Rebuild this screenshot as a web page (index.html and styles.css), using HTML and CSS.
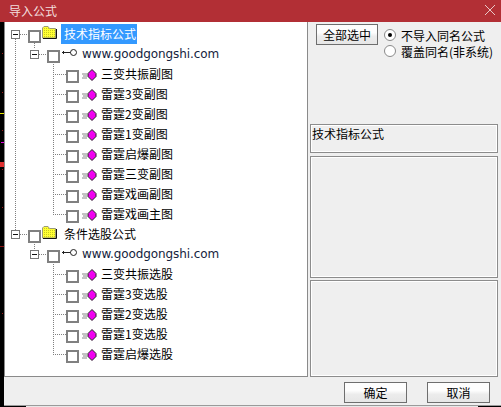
FILE: index.html
```html
<!DOCTYPE html>
<html lang="zh-CN">
<head>
    <meta charset="UTF-8">
    <meta name="viewport" content="width=device-width, initial-scale=1.0">
    <title>导入公式</title>
    <link rel="stylesheet" href="styles.css">
</head>
<body>
    <div class="dialog">
        <div class="titlebar">
            <span class="title">导入公式</span>
            <svg class="close" width="10" height="10" viewBox="0 0 10 10"><path d="M0 0L10 10M10 0L0 10" stroke="#e8c8c8" fill="none"/></svg>
        </div>
        <div class="main">
            <div class="tree">
                <svg class="lines" width="80" height="360" viewBox="0 0 80 360">
                    <defs>
                        <pattern id="dither" width="2" height="2" patternUnits="userSpaceOnUse">
                            <rect width="2" height="2" fill="#ffff33"/>
                            <rect width="1" height="1" fill="#c8c820"/>
                        </pattern>
                    </defs>
                    <path d="M15.5 17V208M20 12.5H28M34.5 21V27M39 32.5H47M53.5 40V192
                             M53 52.5H66M53 72.5H66M53 92.5H66M53 112.5H66M53 132.5H66M53 152.5H66M53 172.5H66M53 192.5H66
                             M20 212.5H28M34.5 222V228M39 232.5H47M53.5 240V332
                             M53 252.5H66M53 272.5H66M53 292.5H66M53 312.5H66M53 332.5H66"/>
                </svg>

                <div class="row lv0">
                    <span class="exp"></span><span class="check"></span>
                    <svg class="folder" width="15" height="13" viewBox="0 0 15 13"><path d="M0.5 12V2L2 0.5H6L7.5 2.5H13.5V12Z" fill="url(#dither)" stroke="#9a9a7a"/><path d="M14.5 3V12.5H1" stroke="#111" fill="none"/></svg>
                    <span class="label selected">技术指标公式</span>
                </div>
                <div class="row lv1">
                    <span class="exp"></span><span class="check"></span>
                    <svg class="key" width="15" height="8" viewBox="0 0 15 8"><path d="M0 4.5H9M1.5 3V6" stroke="#222" fill="none"/><circle cx="11.5" cy="4.5" r="3" fill="#fff" stroke="#222"/></svg>
                    <span class="label site">www.goodgongshi.com</span>
                </div>
                <div class="row lv2"><span class="check"></span><svg class="gem" width="16" height="12" viewBox="0 0 16 12"><path d="M1 5H6M2 7H6M1 9H6" stroke="#888"/><path d="M11 0.5L15 4.5V7.5L11 11.5L7 7.5V4.5Z" fill="#f000f0" stroke="#222"/></svg><span class="label">三变共振副图</span></div>
                <div class="row lv2"><span class="check"></span><svg class="gem" width="16" height="12" viewBox="0 0 16 12"><path d="M1 5H6M2 7H6M1 9H6" stroke="#888"/><path d="M11 0.5L15 4.5V7.5L11 11.5L7 7.5V4.5Z" fill="#f000f0" stroke="#222"/></svg><span class="label">雷霆3变副图</span></div>
                <div class="row lv2"><span class="check"></span><svg class="gem" width="16" height="12" viewBox="0 0 16 12"><path d="M1 5H6M2 7H6M1 9H6" stroke="#888"/><path d="M11 0.5L15 4.5V7.5L11 11.5L7 7.5V4.5Z" fill="#f000f0" stroke="#222"/></svg><span class="label">雷霆2变副图</span></div>
                <div class="row lv2"><span class="check"></span><svg class="gem" width="16" height="12" viewBox="0 0 16 12"><path d="M1 5H6M2 7H6M1 9H6" stroke="#888"/><path d="M11 0.5L15 4.5V7.5L11 11.5L7 7.5V4.5Z" fill="#f000f0" stroke="#222"/></svg><span class="label">雷霆1变副图</span></div>
                <div class="row lv2"><span class="check"></span><svg class="gem" width="16" height="12" viewBox="0 0 16 12"><path d="M1 5H6M2 7H6M1 9H6" stroke="#888"/><path d="M11 0.5L15 4.5V7.5L11 11.5L7 7.5V4.5Z" fill="#f000f0" stroke="#222"/></svg><span class="label">雷霆启爆副图</span></div>
                <div class="row lv2"><span class="check"></span><svg class="gem" width="16" height="12" viewBox="0 0 16 12"><path d="M1 5H6M2 7H6M1 9H6" stroke="#888"/><path d="M11 0.5L15 4.5V7.5L11 11.5L7 7.5V4.5Z" fill="#f000f0" stroke="#222"/></svg><span class="label">雷霆三变副图</span></div>
                <div class="row lv2"><span class="check"></span><svg class="gem" width="16" height="12" viewBox="0 0 16 12"><path d="M1 5H6M2 7H6M1 9H6" stroke="#888"/><path d="M11 0.5L15 4.5V7.5L11 11.5L7 7.5V4.5Z" fill="#f000f0" stroke="#222"/></svg><span class="label">雷霆戏画副图</span></div>
                <div class="row lv2"><span class="check"></span><svg class="gem" width="16" height="12" viewBox="0 0 16 12"><path d="M1 5H6M2 7H6M1 9H6" stroke="#888"/><path d="M11 0.5L15 4.5V7.5L11 11.5L7 7.5V4.5Z" fill="#f000f0" stroke="#222"/></svg><span class="label">雷霆戏画主图</span></div>

                <div class="row lv0">
                    <span class="exp"></span><span class="check"></span>
                    <svg class="folder" width="15" height="13" viewBox="0 0 15 13"><path d="M0.5 12V2L2 0.5H6L7.5 2.5H13.5V12Z" fill="url(#dither)" stroke="#9a9a7a"/><path d="M14.5 3V12.5H1" stroke="#111" fill="none"/></svg>
                    <span class="label">条件选股公式</span>
                </div>
                <div class="row lv1">
                    <span class="exp"></span><span class="check"></span>
                    <svg class="key" width="15" height="8" viewBox="0 0 15 8"><path d="M0 4.5H9M1.5 3V6" stroke="#222" fill="none"/><circle cx="11.5" cy="4.5" r="3" fill="#fff" stroke="#222"/></svg>
                    <span class="label site">www.goodgongshi.com</span>
                </div>
                <div class="row lv2"><span class="check"></span><svg class="gem" width="16" height="12" viewBox="0 0 16 12"><path d="M1 5H6M2 7H6M1 9H6" stroke="#888"/><path d="M11 0.5L15 4.5V7.5L11 11.5L7 7.5V4.5Z" fill="#f000f0" stroke="#222"/></svg><span class="label">三变共振选股</span></div>
                <div class="row lv2"><span class="check"></span><svg class="gem" width="16" height="12" viewBox="0 0 16 12"><path d="M1 5H6M2 7H6M1 9H6" stroke="#888"/><path d="M11 0.5L15 4.5V7.5L11 11.5L7 7.5V4.5Z" fill="#f000f0" stroke="#222"/></svg><span class="label">雷霆3变选股</span></div>
                <div class="row lv2"><span class="check"></span><svg class="gem" width="16" height="12" viewBox="0 0 16 12"><path d="M1 5H6M2 7H6M1 9H6" stroke="#888"/><path d="M11 0.5L15 4.5V7.5L11 11.5L7 7.5V4.5Z" fill="#f000f0" stroke="#222"/></svg><span class="label">雷霆2变选股</span></div>
                <div class="row lv2"><span class="check"></span><svg class="gem" width="16" height="12" viewBox="0 0 16 12"><path d="M1 5H6M2 7H6M1 9H6" stroke="#888"/><path d="M11 0.5L15 4.5V7.5L11 11.5L7 7.5V4.5Z" fill="#f000f0" stroke="#222"/></svg><span class="label">雷霆1变选股</span></div>
                <div class="row lv2"><span class="check"></span><svg class="gem" width="16" height="12" viewBox="0 0 16 12"><path d="M1 5H6M2 7H6M1 9H6" stroke="#888"/><path d="M11 0.5L15 4.5V7.5L11 11.5L7 7.5V4.5Z" fill="#f000f0" stroke="#222"/></svg><span class="label">雷霆启爆选股</span></div>
            </div>

            <div class="side">
                <div class="options">
                    <button class="btn select-all">全部选中</button>
                    <div class="radios">
                        <div class="radio-row"><span class="radio on"></span>不导入同名公式</div>
                        <div class="radio-row"><span class="radio"></span>覆盖同名(非系统)</div>
                    </div>
                </div>
                <div class="panel info">技术指标公式</div>
                <div class="panel middle"></div>
                <div class="panel lower"></div>
            </div>
        </div>
        <div class="footer">
            <button class="btn">确定</button>
            <button class="btn">取消</button>
        </div>
    </div>
    <div class="below"></div>
</body>
</html>
```

FILE: styles.css
```css
* {
    box-sizing: border-box;
}

html, body {
    margin: 0;
    height: 100%;
    overflow: hidden;
}

/* the dark chart behind the dialog shows down the left edge */
body {
    background:
        linear-gradient(#e8e800, #e8e800) 0 113px / 4px 1px no-repeat,
        linear-gradient(#e000e0, #e000e0) 1px 142px / 3px 1px no-repeat,
        linear-gradient(#e03030, #e03030) 0 162px / 4px 5px no-repeat,
        linear-gradient(#8a1010, #8a1010) 0 246px / 4px 1px no-repeat,
        linear-gradient(#a01818, #a01818) 2px 53px / 1px 1px no-repeat,
        linear-gradient(#a01818, #a01818) 2px 92px / 1px 1px no-repeat,
        linear-gradient(#a01818, #a01818) 2px 130px / 1px 1px no-repeat,
        linear-gradient(#a01818, #a01818) 2px 169px / 1px 1px no-repeat,
        linear-gradient(#a01818, #a01818) 2px 207px / 1px 1px no-repeat,
        linear-gradient(#a01818, #a01818) 2px 313px / 1px 1px no-repeat,
        #000;
    font-family: "Noto Sans CJK SC", "Liberation Sans", sans-serif;
    font-size: 12px;
    color: #000;
}

.dialog {
    height: 405px;
    margin-left: 4px;
    display: flex;
    flex-direction: column;
    background: #efefef;
}

.titlebar {
    height: 22px;
    margin-left: -4px;
    padding: 0 5px 2px 9px;
    display: flex;
    align-items: center;
    justify-content: space-between;
    background: #b22f35;
    color: #f3dede;
    font-size: 12px;
}

.close {
    margin-right: 1px;
}

.main {
    display: flex;
    height: 355px;
}

.tree {
    position: relative;
    width: 304px;
    padding-top: 2px;
    background: #fff;
    border-left: 1px solid #8a8a8a;
    border-bottom: 1px solid #8a8a8a;
    border-right: 1px solid #8a8a8a;
}

.lines {
    position: absolute;
    left: -5px;
    top: 0;
}

.lines path {
    fill: none;
    stroke: #808080;
    stroke-dasharray: 1 1;
}

.row {
    position: relative;
    height: 20px;
    display: flex;
    align-items: center;
}

.lv0 { padding-left: 6px; }
.lv1 { padding-left: 25px; }
.lv2 { padding-left: 61px; }

.exp {
    position: relative;
    width: 9px;
    height: 9px;
    margin-right: 8px;
    background: #fff;
    border: 1px solid #777;
}

.exp::after {
    content: "";
    position: absolute;
    left: 1px;
    top: 3px;
    width: 5px;
    height: 1px;
    background: #111;
}

.check {
    width: 13px;
    height: 13px;
    margin-top: 5px;
    background: #fff;
    border: 2px solid #808080;
}

.folder {
    margin: -4px 0 0 1px;
}

.key {
    margin: -4px 0 0 2px;
}

.gem {
    margin: 1px 0 0 2px;
}

.label {
    white-space: nowrap;
    line-height: 20px;
}

.lv0 .label { margin-left: 4px; padding: 0 3px; }
.lv1 .label { margin-left: 5px; }
.lv2 .label { margin-left: 4px; }

.label.selected {
    width: 76px;
    background: #3399ff;
    color: #fff;
}

.site {
    font-family: "DejaVu Sans", sans-serif;
    font-size: 12px;
    letter-spacing: -0.1px;
    color: #14233c;
}

.side {
    flex: 1;
    padding: 2px 3px 0 2px;
    display: flex;
    flex-direction: column;
}

.options {
    height: 100px;
    padding-left: 6px;
    display: flex;
    align-items: flex-start;
}

.btn {
    width: 63px;
    height: 21px;
    padding: 0;
    font: inherit;
    color: #000;
    background: linear-gradient(#fdfdfd 0, #fdfdfd 40%, #ececec 60%, #e6e6e6 100%);
    border: 1px solid #6e6e6e;
}

.select-all {
    width: 62px;
}

.radios {
    margin-left: 6px;
    padding-top: 3px;
}

.radio-row {
    height: 16px;
    display: flex;
    align-items: center;
    gap: 5px;
}

.radio {
    width: 12px;
    height: 12px;
    border-radius: 50%;
    background: #fff;
    border: 1px solid #8a8a8a;
    display: flex;
    align-items: center;
    justify-content: center;
}

.radio.on::after {
    content: "";
    width: 4px;
    height: 4px;
    border-radius: 50%;
    background: #000;
}

.panel {
    border: 1px solid #8c8c8c;
    box-shadow: 0 0 0 1px #fff inset;
    flex: none;
}

.info {
    height: 29px;
    padding-left: 1px;
    line-height: 18px;
    margin-bottom: 3px;
}

.middle {
    height: 122px;
    margin-bottom: 2px;
}

.lower {
    height: 97px;
}

.footer {
    flex: 1;
    display: flex;
    justify-content: flex-end;
    align-items: flex-start;
    gap: 20px;
    padding: 5px 11px 0 0;
}

.below {
    height: 2px;
    background: linear-gradient(90deg, #000 4px, #9a9a9a 4px) 0 0 / 100% 1px no-repeat,
        linear-gradient(90deg, #000 26px, #e8e8e8 26px, #e8e8e8 478px, #000 478px) 0 1px / 100% 1px no-repeat;
}
```
